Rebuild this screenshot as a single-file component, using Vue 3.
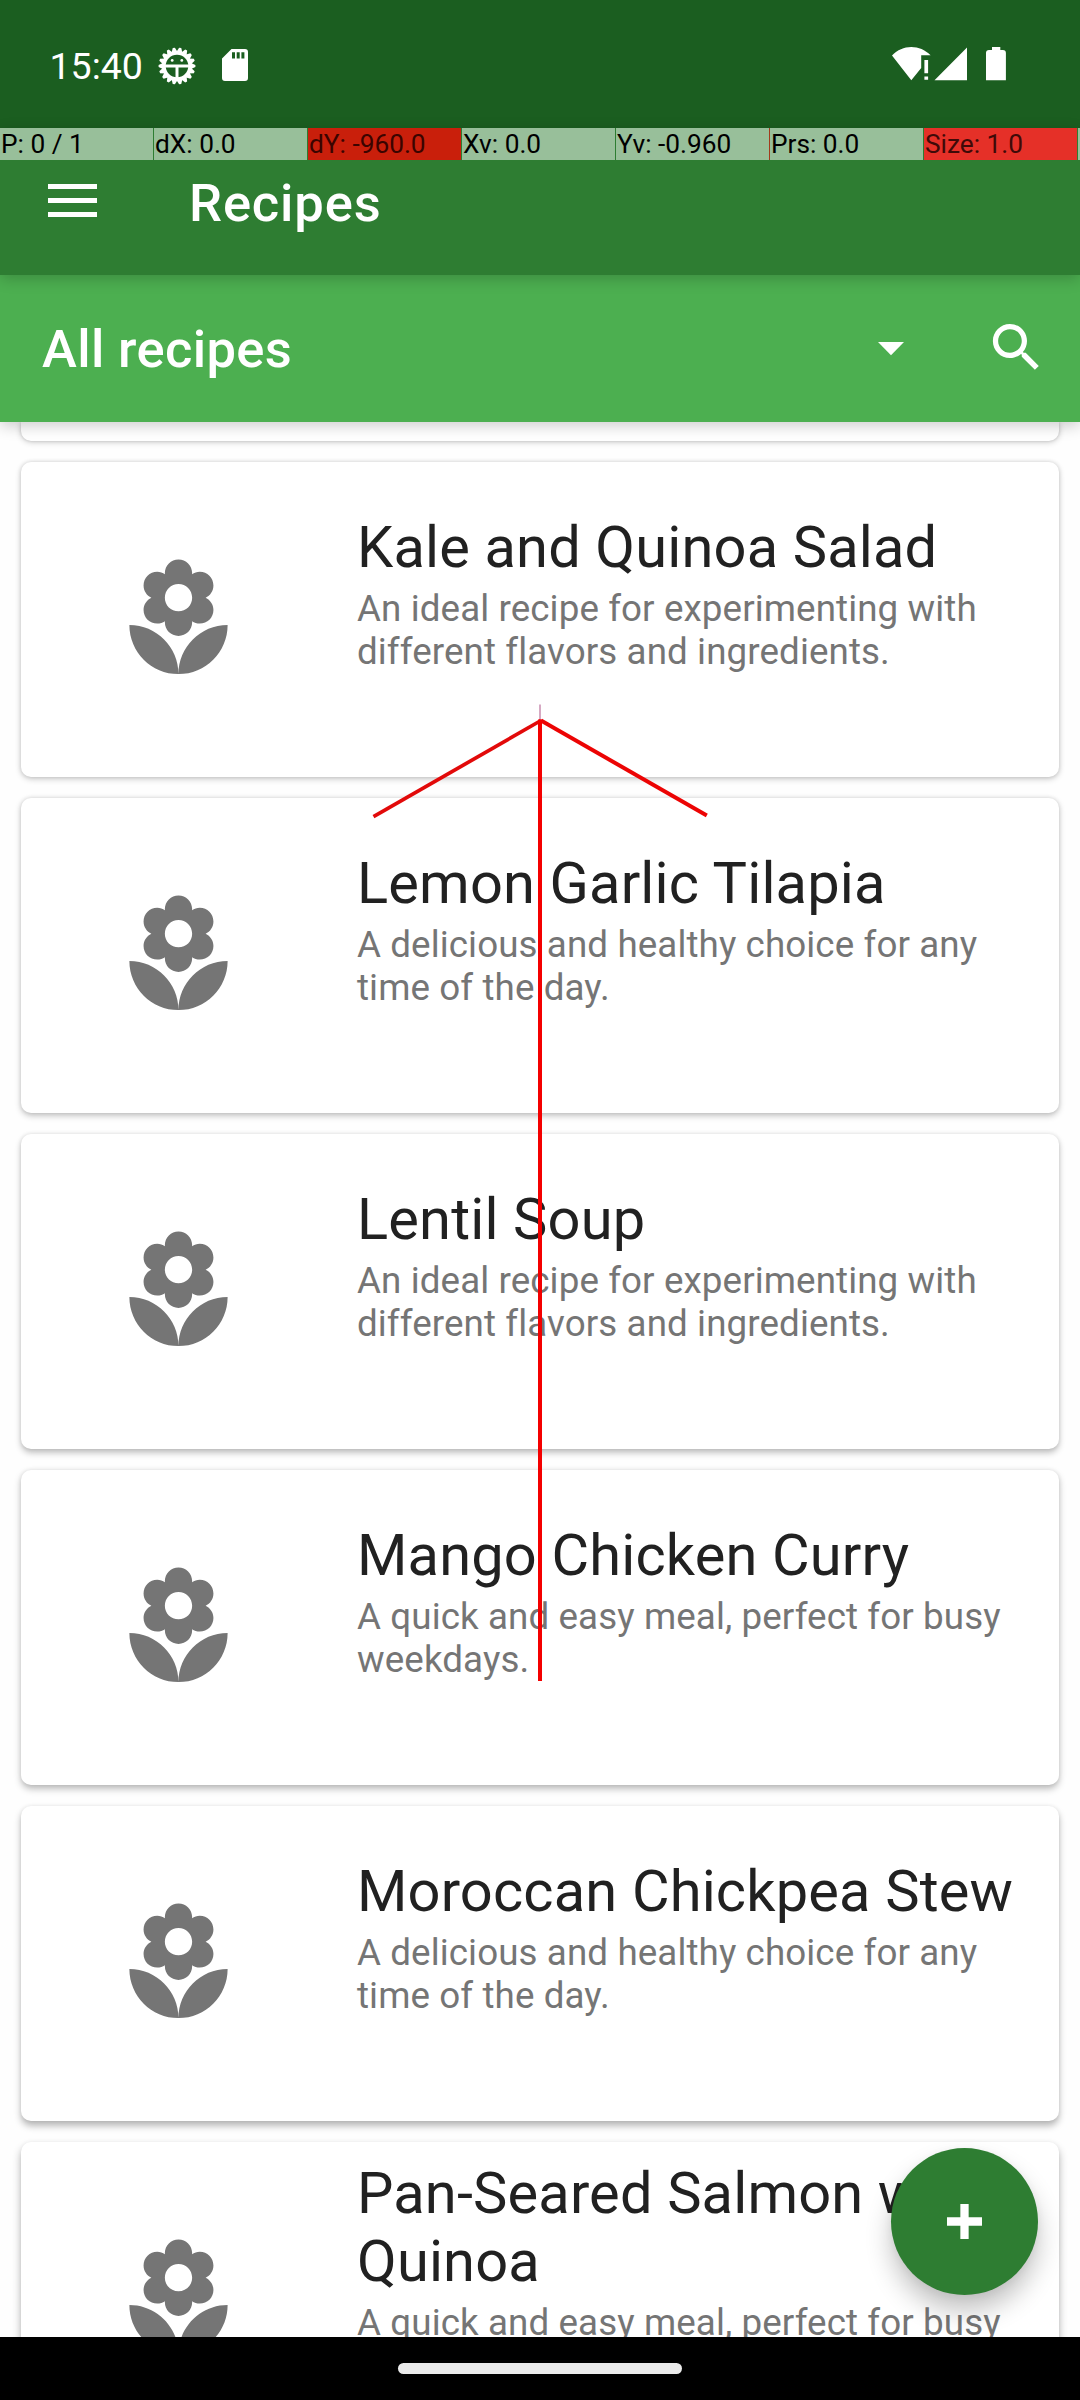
<script setup>
const pointer = [
  { t: 'P: 0 / 1' },
  { t: 'dX: 0.0' },
  { t: 'dY: -960.0', c: 'dark' },
  { t: 'Xv: 0.0' },
  { t: 'Yv: -0.960', c: 'edge' },
  { t: 'Prs: 0.0' },
  { t: 'Size: 1.0', c: 'bright' },
]
const ideal = ['An ideal recipe for experimenting with', 'different flavors and ingredients.']
const delicious = ['A delicious and healthy choice for any', 'time of the day.']
const quick = ['A quick and easy meal, perfect for busy', 'weekdays.']
const recipes = [
  { title: ['Kale and Quinoa Salad'], desc: ideal },
  { title: ['Lemon Garlic Tilapia'], desc: delicious },
  { title: ['Lentil Soup'], desc: ideal },
  { title: ['Mango Chicken Curry'], desc: quick },
  { title: ['Moroccan Chickpea Stew'], desc: delicious },
  { title: ['Pan-Seared Salmon with', 'Quinoa'], desc: quick },
]
// elevation shadows deepen towards the bottom of the screen
const shade = (i) => ({
  boxShadow: `0 ${2 + i * 0.6}px ${6 + i * 0.4}px rgba(0,0,0,${0.2 + i * 0.02}), 0 0 4px rgba(0,0,0,${0.12 - i * 0.015})`,
})
const teeth = Array.from({ length: 18 }, (_, i) => i * 20)
</script>

<template>
  <div class="screen">
    <div class="status">
      <span class="time">15:40</span>
      <svg class="bug" width="38" height="38" viewBox="-19 -19 38 38">
        <path v-for="a in teeth" :key="a" d="M-3.2-13.5L-1.1-18.4H1.1L3.2-13.5z" fill="#fff" :transform="`rotate(${a + 10})`" />
        <circle r="13" fill="none" stroke="#fff" stroke-width="3.4" />
        <path d="M-13 0H13M0 0V14" stroke="#fff" stroke-width="3" />
        <circle cx="-4.8" cy="-5.6" r="1.4" fill="#fff" /><circle cx="4.8" cy="-5.6" r="1.4" fill="#fff" />
      </svg>
      <svg class="sd" width="26" height="32" viewBox="0 0 26 32">
        <path fill="#fff" fill-rule="evenodd" d="M9.5 0H23a3 3 0 0 1 3 3V29a3 3 0 0 1-3 3H3a3 3 0 0 1-3-3V9.5zM10 3.2V9.6h3V3.2zM14.7 3.2V9.6h3V3.2zM19.4 3.2V9.6h3V3.2z" />
      </svg>
      <svg class="sys" width="116" height="36" viewBox="0 0 116 36">
        <path fill="#fff" d="M0 9.5C5.5 4 12 1.1 19.3 1.1S33 4 38.6 9.2H29.2V22L19.3 34.2z" />
        <path fill="#fff" d="M32.4 14h3.7v13.3h-3.7zM32.4 30.6h3.7v3.2h-3.7zM75 1.5V34.2H42.5zM100 1.1h8.3V4h2.6a3 3 0 0 1 3 3V34.2H94V7a3 3 0 0 1 3-3h3z" />
      </svg>
    </div>

    <header class="appbar">
      <div class="pointer">
        <span v-for="p in pointer" :key="p.t" class="cell" :class="p.c">{{ p.t }}</span>
        <span class="rest"></span>
      </div>
      <div class="toolbar">
        <span class="burger"><i></i><i></i><i></i></span>
        <h1>Recipes</h1>
      </div>
    </header>

    <div class="filter">
      <h2>All recipes</h2>
      <svg class="caret" width="26" height="14" viewBox="0 0 26 14"><path fill="#fff" d="M0 0h26L13 13.3z" /></svg>
      <svg class="search" width="63" height="63" viewBox="0 0 24 24"><path fill="#fff" d="M15.5 14h-.79l-.28-.27C15.41 12.59 16 11.11 16 9.5 16 5.91 13.09 3 9.5 3S3 5.91 3 9.5 5.91 16 9.5 16c1.61 0 3.09-.59 4.23-1.57l.27.28v.79l5 4.99L20.49 19l-4.99-5zm-6 0C7.01 14 5 11.99 5 9.5S7.01 5 9.5 5 14 7.01 14 9.5 11.99 14 9.5 14z" /></svg>
    </div>

    <main class="list">
      <article class="card stub"></article>
      <article v-for="(r, i) in recipes" :key="i" class="card" :style="shade(i)">
        <div class="pic">
          <svg width="131" height="131" viewBox="0 0 24 24"><path fill="#757575" d="M12 22c4.97 0 9-4.03 9-9-4.97 0-9 4.03-9 9zM5.6 10.25c0 1.38 1.12 2.5 2.5 2.5.53 0 1.01-.16 1.42-.44l-.02.19c0 1.38 1.12 2.5 2.5 2.5s2.5-1.12 2.5-2.5l-.02-.19c.4.28.89.44 1.42.44 1.38 0 2.5-1.12 2.5-2.5 0-1-.59-1.85-1.43-2.25.84-.4 1.43-1.25 1.43-2.25 0-1.38-1.12-2.5-2.5-2.5-.53 0-1.01.16-1.42.44l.02-.19C14.5 2.12 13.38 1 12 1S9.500 2.120 9.500 3.500l.02.19c-.4-.28-.89-.44-1.42-.44-1.38 0-2.5 1.12-2.5 2.5 0 1 .59 1.85 1.43 2.25-.84.4-1.43 1.25-1.43 2.25zM12 5.5c1.380 0 2.5 1.12 2.5 2.5s-1.120 2.500-2.500 2.500S9.500 9.380 9.500 8s1.120-2.500 2.500-2.500zM3 13c0 4.970 4.030 9 9 9 0-4.970-4.030-9-9-9z" /></svg>
        </div>
        <div class="info">
          <h3><span v-for="l in r.title" :key="l">{{ l }}</span></h3>
          <p><span v-for="l in r.desc" :key="l">{{ l }}</span></p>
        </div>
      </article>
    </main>

    <button class="fab" aria-label="Add recipe">
      <svg width="35" height="35" viewBox="0 0 35 35"><path fill="none" stroke="#fff" stroke-width="8.3" d="M17.500 0V35M0 17.500H35" /></svg>
    </button>

    <footer class="nav"><span></span></footer>

    <svg class="gesture" width="1080" height="2400" viewBox="0 0 1080 2400">
      <path d="M540 704.5V720" stroke="#d6a9c3" stroke-width="2" />
      <path d="M373.500 816.700L541 720.500" stroke="#e20a0a" stroke-width="3.700" />
      <path d="M541 720.500L706.800 815.500" stroke="#ec0404" stroke-width="4" />
      <path d="M540 719.500V1681" stroke="#f40000" stroke-width="4" />
    </svg>
  </div>
</template>

<style>
html, body { margin: 0; background: #fff; }
</style>

<style scoped>
.screen { position: relative; width: 1080px; height: 2400px; overflow: hidden; display: flex; flex-direction: column; background: #fefefe; font-family: Roboto, sans-serif; }
h1, h2, h3, p { margin: 0; font-weight: 400; }
svg { display: block; flex: none; }
.status { flex: none; box-sizing: border-box; height: 128px; padding: 46px 72px 0 49.5px; display: flex; align-items: flex-start; background: #1b5e20; color: #fff; }
.time { width: 108.5px; font-size: 37.5px; line-height: 40px; white-space: nowrap; }
.bug { margin-top: 1px; }
.sd { margin: 3px 0 0 26px; }
.sys { margin-left: auto; }
.appbar { position: relative; z-index: 3; flex: none; height: 147px; background: #2e7d32; color: #fff; box-shadow: 0 4px 14px rgba(0,0,0,.2); }
.pointer { display: flex; gap: 1px; height: 32px; }
.cell { box-sizing: border-box; width: 153px; padding-left: 1px; background: #98bf9a; color: #000; font-size: 26.25px; line-height: 32px; white-space: nowrap; }
.dark { background: #c91f0b; color: #3b0400; }
.bright { background: #e53028; color: #3f0a08; }
.edge { box-shadow: 1px 0 #a33a1c; }
.rest { flex: 1; background: #98bf9a; }
.toolbar { display: flex; align-items: flex-start; padding-left: 48px; }
.burger { display: flex; flex-direction: column; gap: 9px; width: 49px; margin: 24px 92px 0 0; }
.burger i { height: 5px; background: #fff; }
h1, h2 { font-size: 52.5px; line-height: 62px; font-weight: 500; white-space: nowrap; }
h1 { margin-top: 12px; letter-spacing: .85px; }
.filter { position: relative; z-index: 2; flex: none; box-sizing: border-box; height: 147px; padding: 0 32px 0 42px; display: flex; align-items: flex-start; background: #4caf50; color: #fff; box-shadow: 0 4px 14px rgba(0,0,0,.2); }
h2 { margin-top: 43px; letter-spacing: .35px; }
.caret { margin: 67px 81px 0 auto; }
.search { margin-top: 41px; }
.list { flex: 1; min-height: 0; overflow: hidden; display: flex; flex-direction: column; gap: 21px; padding: 0 21px; }
.card { flex: none; display: flex; height: 315px; border-radius: 10px; background: #fff; }
.stub { height: 19px; border-radius: 0 0 10px 10px; box-shadow: 0 1px 6px rgba(0,0,0,.22), 0 0 3px rgba(0,0,0,.13); }
.pic { width: 315px; display: flex; align-items: center; justify-content: center; }
.info { margin-left: 21px; padding-bottom: 54px; display: flex; flex-direction: column; justify-content: center; }
h3 span, p span { display: block; white-space: nowrap; }
h3 { font-size: 57.75px; line-height: 68px; color: #212121; letter-spacing: .17px; }
p { margin-top: 6px; font-size: 36.75px; line-height: 43px; color: #757575; letter-spacing: .1px; font-variant-ligatures: common-ligatures; }
.fab { position: absolute; z-index: 2; left: 891px; top: 2148px; width: 147px; height: 147px; padding: 0; border: 0; border-radius: 50%; display: flex; align-items: center; justify-content: center; background: #2e7d32; box-shadow: 0 16px 26px rgba(0,0,0,.24), 0 2px 8px rgba(0,0,0,.05); }
.fab svg { border-radius: 2px; }
.nav { position: relative; z-index: 3; flex: none; height: 63px; display: flex; justify-content: center; background: #000; }
.nav span { width: 284px; height: 11px; margin-top: 26px; border-radius: 5.500px; background: #ebebeb; }
.gesture { position: absolute; z-index: 5; left: 0; top: 0; pointer-events: none; }
</style>
